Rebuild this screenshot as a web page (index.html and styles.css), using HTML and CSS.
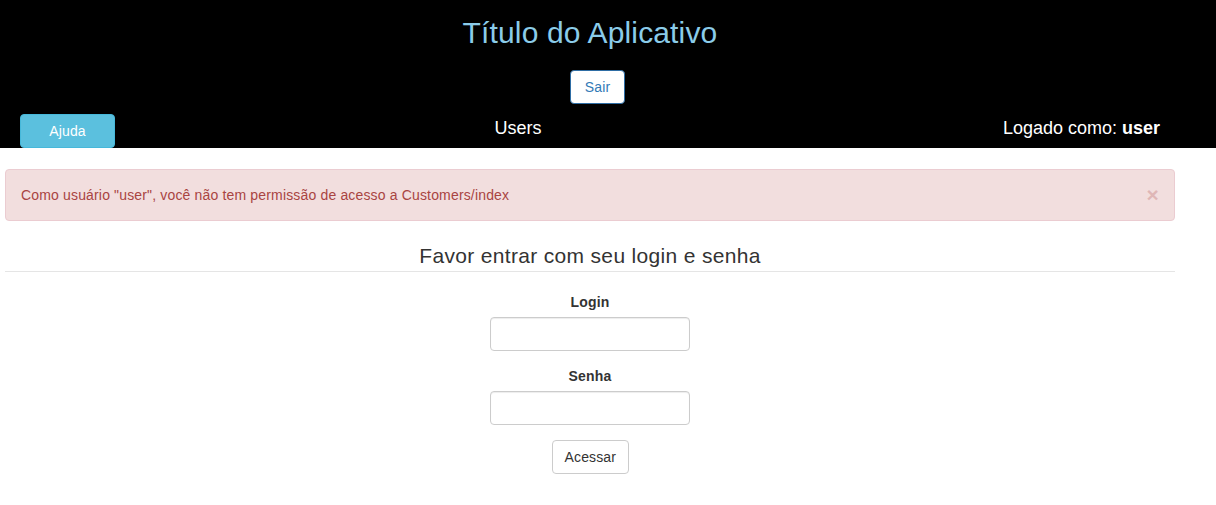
FILE: index.html
```html
<!DOCTYPE html>
<html lang="pt">
<head>
<meta charset="utf-8">
<title>Título do Aplicativo</title>
<link rel="stylesheet" href="styles.css">
</head>
<body>
<header class="topbar">
  <div class="wrap">
    <h1 class="app-title">Título do Aplicativo</h1>
    <div class="logout-row"><button class="btn btn-logout" type="button">Sair</button></div>
    <div class="nav-row">
      <div class="nav-left"><button class="btn btn-info" type="button">Ajuda</button></div>
      <div class="nav-mid">Users</div>
      <div class="nav-right">Logado como: <strong>user</strong></div>
    </div>
  </div>
</header>
<main class="wrap content">
  <div class="alert">
    Como usuário "user", você não tem permissão de acesso a Customers/index
    <span class="close">×</span>
  </div>
  <form class="login-form">
    <div class="legend">Favor entrar com seu login e senha</div>
    <div class="form-group">
      <label class="label">Login</label>
      <input class="input" type="text">
    </div>
    <div class="form-group">
      <label class="label">Senha</label>
      <input class="input" type="password">
    </div>
    <div class="actions"><button class="btn btn-default" type="button">Acessar</button></div>
  </form>
</main>
</body>
</html>
```
FILE: styles.css
```css
* { box-sizing: border-box; }
html, body { margin: 0; padding: 0; }
body {
  font-family: "Liberation Sans", Arial, sans-serif;
  font-size: 14px;
  line-height: 1.42857;
  color: #333;
  background: #fff;
}
.wrap {
  width: 1170px;
  margin-left: 5px;
}
.topbar {
  background: #000;
  height: 148px;
}
.topbar .wrap { padding-top: 16px; }
.app-title {
  margin: 0;
  font-size: 30px;
  font-weight: 400;
  line-height: 33px;
  color: #8bcce9;
  text-align: center;
  letter-spacing: 0.15px;
}
.logout-row {
  margin-top: 21px;
  text-align: center;
  padding-left: 15px;
}
.btn {
  display: inline-block;
  font-family: "Liberation Sans", Arial, sans-serif;
  font-size: 14px;
  line-height: 20px;
  padding: 6px 12px;
  border: 1px solid transparent;
  border-radius: 4px;
  cursor: pointer;
  margin: 0;
  letter-spacing: 0.15px;
}
.btn-logout {
  background: #fff;
  color: #337ab7;
  border-color: #2e6da4;
  padding: 6px 14px;
}
.btn-info {
  background: #5bc0de;
  border-color: #46b8da;
  color: #fff;
  width: 95px;
}
.btn-default {
  background: #fff;
  border-color: #ccc;
  color: #333;
  width: 77px;
}
.nav-row {
  margin-top: 10px;
  display: grid;
  grid-template-columns: 395px 236px 1fr;
  align-items: start;
}
.nav-left { padding-left: 15px; }
.nav-mid {
  text-align: center;
  color: #fff;
  font-size: 18px;
  line-height: 26px;
  padding-top: 1px;
}
.nav-right {
  text-align: right;
  padding-right: 15px;
  color: #fff;
  font-size: 18px;
  line-height: 26px;
  padding-top: 1px;
}
.nav-right strong { font-weight: 700; }
.content { padding-top: 21px; }
.alert {
  position: relative;
  background: #f2dede;
  border: 1px solid #ebccd1;
  color: #a94442;
  border-radius: 4px;
  padding: 16px 35px 14px 15px;
  margin-bottom: 20px;
  letter-spacing: 0.16px;
}
.close {
  position: absolute;
  right: 15px;
  top: 14px;
  font-size: 21px;
  font-weight: 700;
  line-height: 1;
  color: #a94442;
  opacity: 0.25;
}
.legend {
  font-size: 21px;
  line-height: 30px;
  text-align: center;
  border-bottom: 1px solid #e5e5e5;
  margin-bottom: 20px;
  color: #333;
  letter-spacing: 0.33px;
}
.form-group {
  display: flex;
  flex-direction: column;
  align-items: center;
  margin-bottom: 15px;
}
.label {
  font-weight: 700;
  line-height: 20px;
  margin-bottom: 5px;
  letter-spacing: 0.15px;
}
.input {
  width: 200px;
  height: 34px;
  border: 1px solid #ccc;
  border-radius: 4px;
  box-shadow: inset 0 1px 1px rgba(0,0,0,.075);
  padding: 6px 12px;
  font-size: 14px;
  font-family: inherit;
  background: #fff;
}
.actions { text-align: center; }
```
